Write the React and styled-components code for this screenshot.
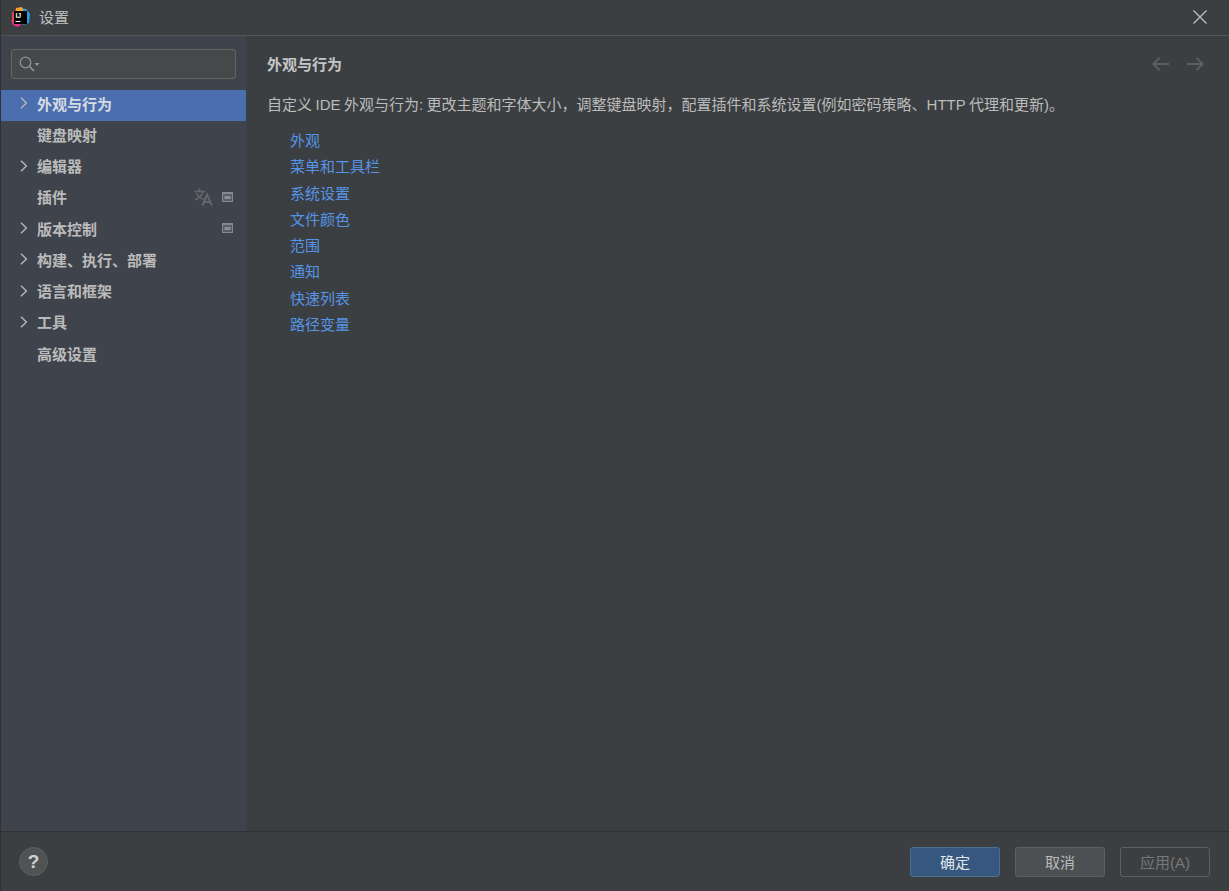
import React from "react";
import styled, { createGlobalStyle } from "styled-components";

const FONT = `"Liberation Sans", "Noto Sans CJK SC", sans-serif`;

const Global = createGlobalStyle`
  html, body { margin: 0; padding: 0; background: #3c3f41; }
  #root { width: 1229px; height: 891px; overflow: hidden; }
`;

const Window = styled.div`
  width: 1229px;
  height: 891px;
  display: flex;
  flex-direction: column;
  background: #3c3f41;
  border-left: 1px solid #2f3133;
  box-sizing: border-box;
  font-family: ${FONT};
  color: #bbbbbb;
  font-size: 15px;
  overflow: hidden;
`;

const TitleBar = styled.div`
  height: 36px;
  flex: none;
  display: flex;
  align-items: center;
  padding: 0 22px 2px 8px;
  gap: 8px;
  border-bottom: 1px solid #535556;
  box-sizing: border-box;
`;

const TitleText = styled.div`
  flex: 1;
  font-size: 15px;
  color: #bdbfc0;
`;

const Body = styled.div`
  flex: 1;
  display: flex;
  min-height: 0;
`;

const Sidebar = styled.div`
  width: 245px;
  flex: none;
  background: #3f434c;
  display: flex;
  flex-direction: column;
`;

const SearchBox = styled.div`
  height: 30px;
  margin: 13px 10px 11px 10px;
  border: 1px solid #646464;
  border-radius: 3px;
  background: #45494a;
  display: flex;
  align-items: center;
  padding-left: 7px;
  box-sizing: border-box;
`;

const Tree = styled.div`
  display: flex;
  flex-direction: column;
`;

const Row = styled.div`
  height: 31.25px;
  flex: none;
  display: flex;
  align-items: center;
  padding: 0 13px 5px 19px;
  box-sizing: border-box;
  background: ${(p) => (p.$active ? "#4b6eaf" : "transparent")};
  color: ${(p) => (p.$active ? "#d5dae3" : "#bbbbbb")};
  font-weight: 700;
  font-size: 15px;
`;

const ArrowSlot = styled.span`
  width: 17px;
  flex: none;
  display: flex;
  align-items: center;
`;

const RowLabel = styled.span`
  flex: 1;
`;

const RowIcons = styled.span`
  display: flex;
  align-items: center;
  gap: 9px;
`;

const Content = styled.div`
  flex: 1;
  padding: 17px 25px 0 21px;
  display: flex;
  flex-direction: column;
`;

const Header = styled.div`
  display: flex;
  align-items: center;
  justify-content: space-between;
  height: 20px;
`;

const Heading = styled.div`
  font-size: 15px;
  font-weight: 700;
  color: #c4c6c7;
`;

const NavArrows = styled.div`
  display: flex;
  gap: 16px;
  padding-top: 2px;
`;

const Description = styled.div`
  margin-top: 22px;
  font-size: 15px;
  line-height: 20px;
  word-spacing: -0.7px;
  color: #bbbbbb;
  white-space: nowrap;
`;

const Links = styled.div`
  margin-top: 13px;
  padding-left: 23px;
  display: flex;
  flex-direction: column;
  align-items: flex-start;
`;

const LinkItem = styled.a`
  height: 26.25px;
  line-height: 26.25px;
  font-size: 15px;
  color: #5594e6;
`;

const Footer = styled.div`
  height: 60px;
  flex: none;
  border-top: 1px solid #323232;
  display: flex;
  align-items: center;
  padding: 0 19px 0 18px;
  box-sizing: border-box;
  background: #3c3f41;
`;

const HelpButton = styled.div`
  width: 29px;
  height: 29px;
  border-radius: 50%;
  border: 1px solid #5d6060;
  background: #505354;
  box-sizing: border-box;
  color: #d0d0d0;
  font-weight: 700;
  font-size: 19px;
  display: flex;
  align-items: center;
  justify-content: center;
`;

const Spacer = styled.div`
  flex: 1;
`;

const Buttons = styled.div`
  display: flex;
  gap: 15px;
`;

const Button = styled.div`
  width: 90px;
  height: 30px;
  border-radius: 3px;
  box-sizing: border-box;
  font-size: 15px;
  display: flex;
  align-items: center;
  justify-content: center;
  border: 1px solid ${(p) => (p.$primary ? "#4c708c" : "#5e6060")};
  background: ${(p) =>
    p.$primary ? "#365880" : p.$disabled ? "transparent" : "#4c5052"};
  color: ${(p) =>
    p.$primary ? "#e2e6e9" : p.$disabled ? "#777777" : "#bbbbbb"};
`;

const Logo = () => (
  <svg width="22" height="22" viewBox="0 0 22 22">
    <path d="M3 7 L8 2 L13 2 L8 20 L3 17 Z" fill="#f0473d" />
    <path d="M2 14 L4 19 L9 21 L13 18 Z" fill="#e0318e" />
    <path d="M12 2 L17 3 L21 8 L20 17 L14 19 Z" fill="#2b9be8" />
    <path d="M7 2 L13 1 L15 6 L7 6 Z" fill="#f7a52a" />
    <rect x="5" y="5" width="13" height="13" fill="#000000" />
    <text x="6.4" y="12" fontFamily={FONT} fontSize="7" fontWeight="700" fill="#ffffff">
      IJ
    </text>
    <rect x="6.5" y="15" width="5" height="1" fill="#ffffff" />
  </svg>
);

const CloseIcon = () => (
  <svg width="14" height="14" viewBox="0 0 14 14" stroke="#c0c2c3" strokeWidth="1.2">
    <path d="M0.5 0.5 L13.5 13.5 M13.5 0.5 L0.5 13.5" />
  </svg>
);

const Chevron = () => (
  <svg width="8" height="12" viewBox="0 0 8 12" fill="none" stroke="#b4b6b8" strokeWidth="1.4">
    <path d="M1 0.8 L6.4 6 L1 11.2" />
  </svg>
);

const SearchIcon = () => (
  <svg width="22" height="17" viewBox="0 0 22 17" fill="none" stroke="#8f9293" strokeWidth="1.3">
    <circle cx="6.5" cy="6.5" r="5.3" />
    <path d="M10.4 10.4 L15 15" strokeWidth="1.6" />
    <path d="M15.5 7 H20.5 L18 10 Z" fill="#8f9293" stroke="none" />
  </svg>
);

const NavArrow = ({ flip }) => (
  <svg
    width="18"
    height="14"
    viewBox="0 0 18 14"
    fill="none"
    stroke="#5c5f61"
    strokeWidth="2"
    transform={flip ? "scale(-1 1)" : undefined}
  >
    <path d="M1.5 7 H17 M7.5 1 L1.5 7 L7.5 13" />
  </svg>
);

const TranslateIcon = () => (
  <svg width="19" height="18" viewBox="0 0 19 18" fill="none" stroke="#646769" strokeWidth="1.6">
    <path d="M0.5 3.5 H11 M5.5 0.5 V3.5 M9 3.5 C8 7.5 5 10.5 1 12 M2.5 5 C4 8.5 6.5 10.5 9.5 11.5" />
    <path d="M8.5 17.5 L13 6.5 L17.8 17.5 M10 14 H16.5" strokeWidth="2" />
  </svg>
);

const PluginBox = () => (
  <svg width="11" height="10" viewBox="0 0 11 10">
    <rect x="0.5" y="0.5" width="10" height="9" fill="#585e66" stroke="#858a91" />
    <rect x="0" y="0" width="11" height="2" fill="#858a91" />
    <rect x="2.5" y="4" width="6" height="3" fill="#8b9096" />
  </svg>
);

const treeItems = [
  { label: "外观与行为", arrow: true, active: true },
  { label: "键盘映射" },
  { label: "编辑器", arrow: true },
  { label: "插件", translate: true, box: true },
  { label: "版本控制", arrow: true, box: true },
  { label: "构建、执行、部署", arrow: true },
  { label: "语言和框架", arrow: true },
  { label: "工具", arrow: true },
  { label: "高级设置" },
];

const links = ["外观", "菜单和工具栏", "系统设置", "文件颜色", "范围", "通知", "快速列表", "路径变量"];

export default function App() {
  return (
    <Window>
      <Global />
      <TitleBar>
        <Logo />
        <TitleText>设置</TitleText>
        <CloseIcon />
      </TitleBar>
      <Body>
        <Sidebar>
          <SearchBox>
            <SearchIcon />
          </SearchBox>
          <Tree>
            {treeItems.map((item) => (
              <Row key={item.label} $active={item.active}>
                <ArrowSlot>{item.arrow && <Chevron />}</ArrowSlot>
                <RowLabel>{item.label}</RowLabel>
                <RowIcons>
                  {item.translate && <TranslateIcon />}
                  {item.box && <PluginBox />}
                </RowIcons>
              </Row>
            ))}
          </Tree>
        </Sidebar>
        <Content>
          <Header>
            <Heading>外观与行为</Heading>
            <NavArrows>
              <NavArrow />
              <NavArrow flip />
            </NavArrows>
          </Header>
          <Description>
            自定义 IDE 外观与行为: 更改主题和字体大小，调整键盘映射，配置插件和系统设置(例如密码策略、HTTP 代理和更新)。
          </Description>
          <Links>
            {links.map((l) => (
              <LinkItem key={l}>{l}</LinkItem>
            ))}
          </Links>
        </Content>
      </Body>
      <Footer>
        <HelpButton>?</HelpButton>
        <Spacer />
        <Buttons>
          <Button $primary>确定</Button>
          <Button>取消</Button>
          <Button $disabled>应用(A)</Button>
        </Buttons>
      </Footer>
    </Window>
  );
}
